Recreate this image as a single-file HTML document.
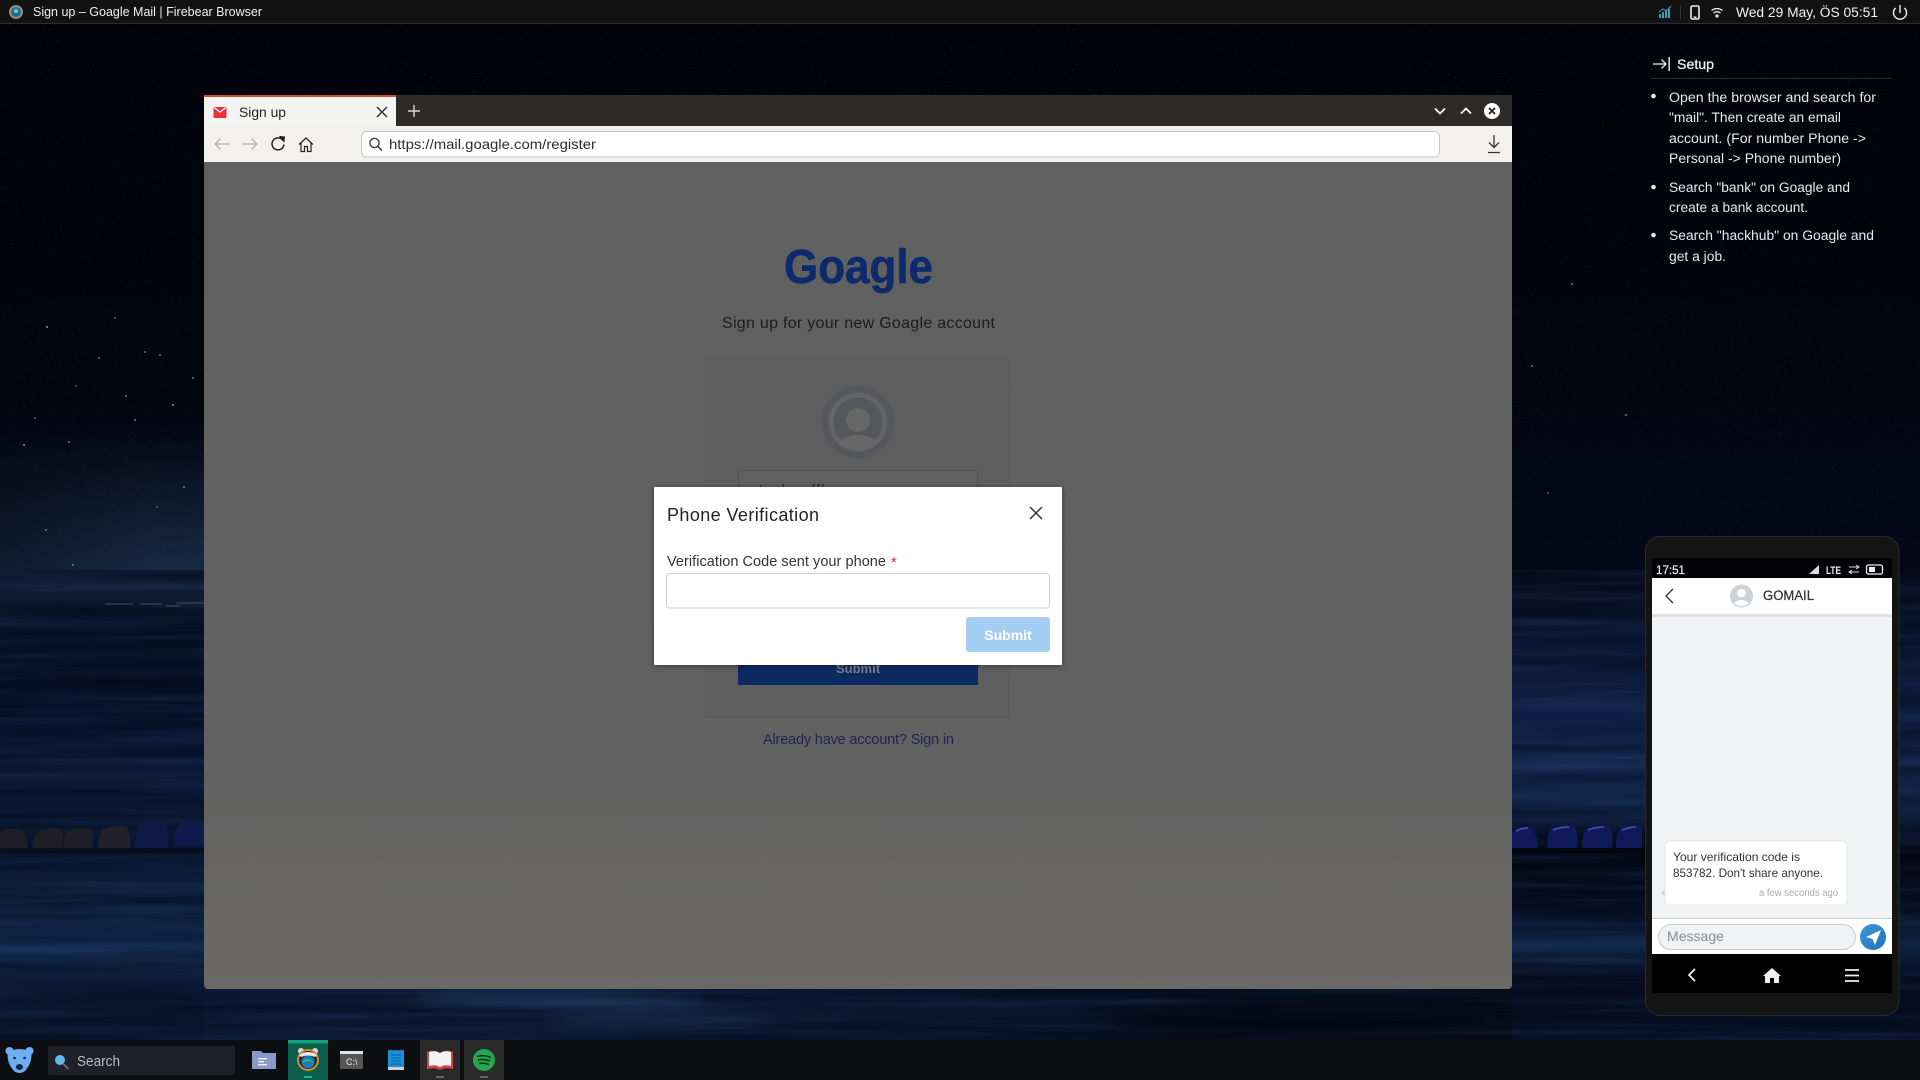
<!DOCTYPE html>
<html><head><meta charset="utf-8"><title>Sign up – Goagle Mail | Firebear Browser</title>
<style>
html,body{margin:0;padding:0;background:#03050e;width:1920px;height:1080px;overflow:hidden}
svg{display:block;position:absolute;left:0;top:0}
text{font-family:"Liberation Sans",sans-serif}
filter{color-interpolation-filters:sRGB}
</style></head><body>
<svg width="1920" height="1080" viewBox="0 0 1920 1080" xmlns="http://www.w3.org/2000/svg">
<defs>
<linearGradient id="sky" x1="0" y1="0" x2="0" y2="1"><stop offset="0" stop-color="#020309"/><stop offset=".6" stop-color="#02040e"/><stop offset="1" stop-color="#040918"/></linearGradient>
<linearGradient id="seaL" x1="0" y1="0" x2="0" y2="1"><stop offset="0" stop-color="#101e33"/><stop offset=".1" stop-color="#0a162b"/><stop offset=".25" stop-color="#061025"/><stop offset=".42" stop-color="#0a1834"/><stop offset=".55" stop-color="#08142b"/><stop offset=".66" stop-color="#0a1c36"/><stop offset=".8" stop-color="#102546"/><stop offset=".92" stop-color="#09182f"/><stop offset="1" stop-color="#09162c"/></linearGradient>
<linearGradient id="seaR" x1="0" y1="0" x2="0" y2="1"><stop offset="0" stop-color="#060b19"/><stop offset=".15" stop-color="#0a1630"/><stop offset=".3" stop-color="#0f1f44"/><stop offset=".5" stop-color="#102448"/><stop offset=".6" stop-color="#030713"/><stop offset=".72" stop-color="#061024"/><stop offset=".8" stop-color="#0f2444"/><stop offset=".87" stop-color="#060d1e"/><stop offset="1" stop-color="#061024"/></linearGradient>
<linearGradient id="seaB" x1="0" y1="0" x2="1" y2="0"><stop offset="0" stop-color="#0b1b34"/><stop offset=".45" stop-color="#0a1a32"/><stop offset=".65" stop-color="#081327"/><stop offset="1" stop-color="#050b18"/></linearGradient>
<linearGradient id="glow" x1="0" y1="0" x2="0" y2="1"><stop offset="0" stop-color="#22405f" stop-opacity="0"/><stop offset="1" stop-color="#22405f" stop-opacity=".6"/></linearGradient>
<linearGradient id="glowx" x1="0" y1="0" x2="1" y2="0"><stop offset="0" stop-color="#fff" stop-opacity=".55"/><stop offset=".6" stop-color="#fff" stop-opacity="1"/><stop offset=".85" stop-color="#fff" stop-opacity="1"/><stop offset="1" stop-color="#fff" stop-opacity="0"/></linearGradient>
<mask id="gm"><rect x="0" y="380" width="260" height="190" fill="url(#glowx)"/></mask>
<linearGradient id="content" x1="0" y1="0" x2="0" y2="1"><stop offset="0" stop-color="#606060"/><stop offset=".75" stop-color="#626262"/><stop offset="1" stop-color="#6b6966"/></linearGradient>
<linearGradient id="send" x1="0" y1="0" x2="1" y2="1"><stop offset="0" stop-color="#3f97dc"/><stop offset="1" stop-color="#1d72bd"/></linearGradient>
<filter id="streak" x="0" y="0" width="100%" height="100%"><feTurbulence type="fractalNoise" baseFrequency="0.004 0.11" numOctaves="3" seed="7"/><feColorMatrix values="0 0 0 0 .2  0 0 0 0 .3  0 0 0 0 .52  2.2 0 0 0 -.9"/></filter>
<filter id="dark" x="0" y="0" width="100%" height="100%"><feTurbulence type="fractalNoise" baseFrequency="0.003 0.07" numOctaves="2" seed="21"/><feColorMatrix values="0 0 0 0 0  0 0 0 0 .02  0 0 0 0 .08  2.2 0 0 0 -.9"/></filter>
<filter id="stars" x="0" y="0" width="100%" height="100%"><feTurbulence type="fractalNoise" baseFrequency="0.75" numOctaves="1" seed="4"/><feColorMatrix values="0 0 0 0 .8  0 0 0 0 .85  0 0 0 0 1  9 0 0 0 -6.4"/></filter>
<filter id="sh" x="-10%" y="-10%" width="120%" height="125%"><feDropShadow dx="0" dy="1" stdDeviation="3" flood-color="#000" flood-opacity=".4"/></filter>
<filter id="b8"><feGaussianBlur stdDeviation="7"/></filter>
<clipPath id="seaClip"><rect x="0" y="570" width="1920" height="470"/></clipPath>
<clipPath id="brClip"><path d="M204 95H1512V985a4 4 0 0 1-4 4H208a4 4 0 0 1-4-4Z"/></clipPath>
<clipPath id="cardClip"><rect x="738" y="470" width="240" height="17"/></clipPath>
</defs>

<!-- wallpaper -->
<rect width="1920" height="570" fill="url(#sky)"/>
<rect x="0" y="420" width="260" height="150" fill="url(#glow)" mask="url(#gm)"/>
<rect y="0" width="1920" height="570" filter="url(#stars)" opacity=".3"/>
<g fill="#dfe8f5" opacity=".65">
<circle cx="47" cy="327" r="1"/><circle cx="99" cy="358" r=".9"/><circle cx="115" cy="318" r=".8"/><circle cx="76" cy="386" r=".8"/><circle cx="126" cy="396" r=".9"/><circle cx="173" cy="405" r="1"/><circle cx="135" cy="420" r=".9"/><circle cx="24" cy="445" r="1"/><circle cx="69" cy="442" r=".9"/><circle cx="35" cy="418" r=".8"/><circle cx="145" cy="352" r=".9"/><circle cx="160" cy="355" r=".9"/><circle cx="193" cy="378" r=".9"/><circle cx="184" cy="487" r=".9"/><circle cx="46" cy="530" r=".9"/><circle cx="73" cy="565" r=".9"/><circle cx="157" cy="507" r=".8"/>
<circle cx="1572" cy="284" r=".9"/><circle cx="1532" cy="366" r=".9"/><circle cx="1626" cy="415" r=".9"/><circle cx="1548" cy="493" r=".8"/>
</g>
<rect x="0" y="570" width="204" height="470" fill="url(#seaL)"/>
<rect x="1512" y="570" width="408" height="470" fill="url(#seaR)"/>
<rect x="204" y="570" width="1308" height="470" fill="url(#seaB)"/>
<g clip-path="url(#seaClip)">
<rect y="570" width="1920" height="470" filter="url(#streak)" opacity=".25"/>
<rect y="570" width="1920" height="470" filter="url(#dark)" opacity=".5"/>
<g filter="url(#b8)">
<ellipse cx="1580" cy="762" rx="120" ry="3" fill="#4a70aa" opacity=".3"/>
<ellipse cx="1580" cy="795" rx="120" ry="3" fill="#4a70aa" opacity=".3"/>
<ellipse cx="1570" cy="945" rx="110" ry="6" fill="#2c568e" opacity=".4"/>
<ellipse cx="100" cy="950" rx="160" ry="4" fill="#2c5590" opacity=".35"/>
<ellipse cx="560" cy="1000" rx="150" ry="4" fill="#3f6aa5" opacity=".5"/>
<ellipse cx="660" cy="1022" rx="110" ry="3" fill="#3f6aa5" opacity=".4"/>
<ellipse cx="1300" cy="1020" rx="190" ry="14" fill="#030814" opacity=".9"/>
</g>
<path d="M105 604h28M140 604h22M166 606h14M176 603h28" stroke="#9fb6d2" stroke-width="1" opacity=".35"/>
<!-- buoys left -->
<g>
<path d="M0 832q10-6 22-2q6 4 6 20H0Z" fill="#1e1c26"/><path d="M32 850q0-18 10-20q16-4 19 0q4 6 0 20Z" fill="#1f1d28"/><path d="M63 850q0-18 8-20q14-4 20 0q4 6 2 20Z" fill="#1f1d28"/><path d="M98 850q0-20 8-22q14-4 22 0q3 8 2 22Z" fill="#22202b"/><path d="M135 848q0-20 8-24q14-4 24 0q2 10 1 24Z" fill="#101a48"/><path d="M174 846q0-20 8-23q14-3 22 0v23Z" fill="#0f1a4d"/>
<rect y="848" width="204" height="5" fill="#060a14" opacity=".7"/>
<g fill="#101a58"><path d="M1512 850v-18q8-6 18-5q8 6 8 23Z"/><path d="M1547 850q0-20 6-23q14-3 22 0q4 8 2 23Z"/><path d="M1582 850q0-20 6-23q14-3 22 0q4 8 2 23Z"/><path d="M1616 850q0-20 6-23q12-3 20 0v23Z"/></g>
<g stroke="#3f56c0" stroke-width="1.5" fill="none"><path d="M1516 831q6-3 12-3M1553 830q8-3 16-3M1588 830q8-3 16-3M1622 830q8-3 14-3"/></g>
<rect x="1512" y="848" width="133" height="5" fill="#04060f"/>
</g>
</g>

<!-- top panel -->
<rect width="1920" height="23" fill="#121212"/><rect y="23" width="1920" height="1" fill="#2d2d2d"/>
<circle cx="16" cy="12" r="7" fill="#a08a70"/><circle cx="16" cy="12" r="5" fill="#1b6e98"/><circle cx="16" cy="11" r="2.200" fill="#59c4d8"/>
<text x="33" y="16" fill="#f0f0f0" font-size="13" textLength="229" lengthAdjust="spacingAndGlyphs">Sign up – Goagle Mail | Firebear Browser</text>
<g fill="#2aa6c4"><rect x="1659" y="14" width="2" height="4"/><rect x="1662" y="12" width="2" height="6"/><rect x="1665" y="10" width="2" height="8"/><rect x="1668" y="9" width="2" height="9"/></g>
<path d="M1659 12l4-3 3 2 5-5" stroke="#6c8fc0" fill="none"/>
<rect x="1680" y="5" width="1" height="15" fill="#333"/>
<rect x="1691" y="6" width="8" height="13" rx="1.4" fill="none" stroke="#eee" stroke-width="1.6"/><rect x="1693.5" y="16.5" width="3" height="1.4" fill="#eee"/>
<g fill="none" stroke="#eee" stroke-width="1.3"><path d="M1711.5 10.5q5.500-4 11 0"/><path d="M1713.5 13q3.500-2.600 7 0"/></g><circle cx="1717" cy="16" r="1.6" fill="#eee"/>
<text x="1736" y="17" fill="#f2f2f2" font-size="13.500" textLength="142" lengthAdjust="spacingAndGlyphs">Wed 29 May, ÖS 05:51</text>
<path d="M1895.500 8a6.500 6.500 0 1 0 9 0M1900 5v8" fill="none" stroke="#eee" stroke-width="1.400"/>

<!-- setup panel -->
<path d="M1653 64h13M1661.500 59.500l4.500 4.500-4.500 4.500" fill="none" stroke="#eee" stroke-width="1.300"/><rect x="1668.500" y="57" width="1.400" height="14" fill="#eee"/>
<text x="1677" y="69" fill="#f0f0f0" stroke="#f0f0f0" stroke-width=".3" font-size="14" textLength="37" lengthAdjust="spacingAndGlyphs">Setup</text>
<rect x="1651" y="78" width="241" height="1" fill="#2a2c30"/>
<g fill="#e9e9e9" font-size="13.500">
<circle cx="1653.500" cy="96" r="2.300"/><circle cx="1653.500" cy="187" r="2.300"/><circle cx="1653.500" cy="235" r="2.300"/>
<text x="1669" y="102" textLength="207" lengthAdjust="spacingAndGlyphs">Open the browser and search for</text>
<text x="1669" y="122" textLength="172" lengthAdjust="spacingAndGlyphs">"mail". Then create an email</text>
<text x="1669" y="143" textLength="197" lengthAdjust="spacingAndGlyphs">account. (For number Phone -&gt;</text>
<text x="1669" y="163" textLength="172" lengthAdjust="spacingAndGlyphs">Personal -&gt; Phone number)</text>
<text x="1669" y="192" textLength="181" lengthAdjust="spacingAndGlyphs">Search "bank" on Goagle and</text>
<text x="1669" y="212" textLength="139" lengthAdjust="spacingAndGlyphs">create a bank account.</text>
<text x="1669" y="240" textLength="205" lengthAdjust="spacingAndGlyphs">Search "hackhub" on Goagle and</text>
<text x="1669" y="261" textLength="57" lengthAdjust="spacingAndGlyphs">get a job.</text>
</g>

<!-- browser -->
<g clip-path="url(#brClip)">
<rect x="204" y="95" width="1308" height="31" fill="#2c2b29"/>
<rect x="204" y="95" width="192" height="31" fill="#f4f4f2"/><rect x="204" y="95" width="192" height="2" fill="#d8492b"/>
<rect x="204" y="126" width="1308" height="36" fill="#f2f1ee"/>
<rect x="204" y="162" width="1308" height="827" fill="url(#content)"/>
</g>
<path d="M213.500 107h13v10a1 1 0 0 1-1 1h-11a1 1 0 0 1-1-1Z" fill="#e8333c"/><path d="M214 107.500l6 4.500 6-4.500" fill="none" stroke="#fff" stroke-width="1.200"/>
<text x="239" y="117" fill="#222" font-size="14" textLength="47" lengthAdjust="spacingAndGlyphs">Sign up</text>
<path d="M377 107l10 10M387 107l-10 10" stroke="#333" stroke-width="1.500"/>
<path d="M414 105v12M408 111h12" stroke="#d5d5d5" stroke-width="1.500"/>
<path d="M1435 108.500l5 5 5-5M1461 113.500l5-5 5 5" fill="none" stroke="#fff" stroke-width="1.700"/>
<circle cx="1492" cy="111" r="8" fill="#fff"/><path d="M1489 108l6 6M1495 108l-6 6" stroke="#222" stroke-width="1.800"/>
<path d="M230 144h-15M220.500 138.500l-5.500 5.500 5.500 5.500" fill="none" stroke="#b0b0b0" stroke-width="1.300"/>
<path d="M242 144h15M251.500 138.500l5.500 5.500-5.500 5.500" fill="none" stroke="#b0b0b0" stroke-width="1.300"/>
<path d="M283 140.500a6 6 0 1 0 1 4" fill="none" stroke="#222" stroke-width="1.500"/><path d="M280 136.500l4.500 .5-.5 4.500Z" fill="#222" stroke="#222"/>
<path d="M299 144.500l7-6.500 7 6.500M301 143v8.500h3.500v-5h3v5h3.500V143" fill="none" stroke="#222" stroke-width="1.200"/>
<rect x="361.500" y="131.500" width="1078" height="25.500" rx="5" fill="#fff" stroke="#c9c7c1"/>
<circle cx="374.500" cy="143" r="4.600" fill="none" stroke="#333" stroke-width="1.300"/><path d="M378 146.500l4 4" stroke="#333" stroke-width="1.500"/>
<text x="389" y="149" fill="#2c2c2c" font-size="14" textLength="207" lengthAdjust="spacingAndGlyphs">https://mail.goagle.com/register</text>
<path d="M1494 135v12M1489 142.500l5 5 5-5M1488 152.500h12" fill="none" stroke="#333" stroke-width="1.300"/>

<!-- page -->
<text x="784" y="283" fill="#0c2a6c" stroke="#0c2a6c" stroke-width=".6" font-size="48" font-weight="bold" textLength="149" lengthAdjust="spacingAndGlyphs">Goagle</text>
<text x="722" y="328" fill="#1c1c1c" font-size="16" textLength="273" lengthAdjust="spacing">Sign up for your new Goagle account</text>
<rect x="704" y="355" width="306" height="362" rx="2" fill="#5e5e5e"/>
<rect x="706" y="717" width="302" height="1" fill="#585858"/>
<circle cx="858" cy="422" r="33" fill="none" stroke="#54575b" stroke-width="6.500"/>
<circle cx="858" cy="422" r="29" fill="#666"/>
<circle cx="858" cy="422" r="24.500" fill="#54575b"/>
<circle cx="858" cy="420" r="12" fill="#676767"/>
<path d="M841 440q17-11 34 0q-7 6.500-17 6.500t-17-6.500Z" fill="#676767"/>
<rect x="738.500" y="470.500" width="239" height="36" rx="2" fill="#606060" stroke="#505050"/>
<text x="750" y="495" fill="#2e2e2e" font-size="15" textLength="84" lengthAdjust="spacing" clip-path="url(#cardClip)">stackwaffle</text>
<rect x="738" y="660" width="240" height="25" rx="1" fill="#0c2a62"/>
<text x="858" y="673" fill="#7c8089" font-size="13" font-weight="bold" text-anchor="middle">Submit</text>
<text x="763" y="744" fill="#20244f" font-size="14.500" textLength="191" lengthAdjust="spacing">Already have account? Sign in</text>

<!-- modal -->
<rect x="654" y="487" width="408" height="178" rx="1" fill="#fff" filter="url(#sh)"/>
<text x="667" y="521" fill="#222" font-size="18" textLength="152" lengthAdjust="spacing">Phone Verification</text>
<path d="M1030 507l12 12M1042 507l-12 12" stroke="#333" stroke-width="1.500"/>
<text x="667" y="566" fill="#333" font-size="14.500" textLength="219" lengthAdjust="spacing">Verification Code sent your phone</text>
<text x="891" y="567" fill="#dc2a4a" font-size="14.500">*</text>
<rect x="666.500" y="573.500" width="383" height="34.500" rx="3" fill="#fff" stroke="#cfcfcf"/>
<rect x="966" y="617" width="84" height="35" rx="3" fill="#a4cdf3"/>
<text x="1008" y="640" fill="#fff" font-size="14" font-weight="bold" text-anchor="middle">Submit</text>

<!-- phone -->
<rect x="1645.500" y="536.500" width="253.500" height="479" rx="15" fill="#141414" stroke="#2b2b2b"/>
<rect x="1652" y="558" width="240" height="20" fill="#030306"/>
<text x="1656" y="574" fill="#eee" font-size="12" stroke="#eee" stroke-width=".2" textLength="29" lengthAdjust="spacingAndGlyphs">17:51</text>
<path d="M1809 574l10-9v9Z" fill="#ddd"/>
<text x="1826" y="574" fill="#eee" font-size="11" font-weight="bold" textLength="15" lengthAdjust="spacingAndGlyphs">LTE</text>
<path d="M1849 567h10M1856 565l3 2-3 2M1859 572h-10M1852 570l-3 2 3 2" fill="none" stroke="#ddd"/>
<rect x="1866.500" y="565" width="16" height="9" rx="2" fill="none" stroke="#eee" stroke-width="1.300"/><rect x="1869" y="567" width="6" height="5" fill="#eee"/>
<rect x="1652" y="578" width="240" height="376" fill="#f1f2f4"/>
<rect x="1652" y="578" width="240" height="36" fill="#fff"/><rect x="1652" y="614" width="240" height="3" fill="#d5d6d9" opacity=".6"/>
<path d="M1673 589l-7 7 7 7" fill="none" stroke="#333" stroke-width="1.400"/>
<circle cx="1741.500" cy="596" r="11.500" fill="#cfd1d9"/><circle cx="1741.500" cy="593" r="4.300" fill="#fff"/><path d="M1734 603q7.500-6 15 0q-3.500 3-7.500 3t-7.500-3Z" fill="#fff"/>
<text x="1763" y="600" fill="#333" stroke="#333" stroke-width=".25" font-size="13.500" textLength="51" lengthAdjust="spacingAndGlyphs">GOMAIL</text>
<path d="M1665 889l-4 4 4 4Z" fill="#d5d6da"/>
<rect x="1665" y="841" width="182" height="64" rx="5" fill="#fff" stroke="#e6e7ea"/>
<text x="1673" y="861" fill="#333" font-size="12" textLength="127" lengthAdjust="spacingAndGlyphs">Your verification code is</text>
<text x="1673" y="877" fill="#333" font-size="12" textLength="150" lengthAdjust="spacingAndGlyphs">853782. Don't share anyone.</text>
<text x="1838" y="896" fill="#aaa" font-size="10" text-anchor="end" textLength="79" lengthAdjust="spacingAndGlyphs">a few seconds ago</text>
<rect x="1652" y="918" width="240" height="36" fill="#fff"/><rect x="1652" y="918" width="240" height="1" fill="#c9cacc"/>
<rect x="1658.500" y="924.500" width="197" height="25" rx="12.500" fill="#f1f2f4" stroke="#c9cbcf"/>
<text x="1667" y="941" fill="#8b8d93" font-size="14" textLength="57" lengthAdjust="spacingAndGlyphs">Message</text>
<circle cx="1873" cy="937" r="13" fill="url(#send)"/><path d="M1866 937l15-7-6 15-2.500-6Z" fill="#fff"/>
<rect x="1652" y="954" width="240" height="39" fill="#000"/>
<path d="M1695 969l-6 6 6 6" fill="none" stroke="#eee" stroke-width="1.800"/>
<path d="M1763 976l9-8 9 8h-2v7h-5v-5h-4v5h-5v-7Z" fill="#f2f2f2"/>
<path d="M1845 970h14M1845 975.500h14M1845 981h14" stroke="#eee" stroke-width="1.800"/>

<!-- taskbar -->
<rect y="1040" width="1920" height="40" fill="#0d0e11"/>
<circle cx="9.500" cy="1051" r="4" fill="#6eaef2"/><circle cx="29.500" cy="1051" r="4" fill="#6eaef2"/>
<path d="M8 1052q11-6 23 0q2 10-6 19q-5.500 4-11 0q-8-9-6-19Z" fill="#6eaef2"/><ellipse cx="19.500" cy="1067" rx="3.500" ry="3" fill="#0d2647"/><circle cx="14.500" cy="1058" r="1.300" fill="#0d2647"/><circle cx="24.500" cy="1058" r="1.300" fill="#0d2647"/>
<rect x="48" y="1046" width="187" height="29" rx="2" fill="#1e2128"/>
<circle cx="60" cy="1060" r="5" fill="#60bbe8"/><path d="M63.500 1064l5 5" stroke="#777" stroke-width="1.600"/>
<text x="77" y="1066" fill="#bcbcbc" font-size="14.500" textLength="43" lengthAdjust="spacingAndGlyphs">Search</text>
<path d="M252 1051h9l2 2h13v16h-24Z" fill="#8a98c8"/><rect x="258" y="1058" width="9" height="1.400" fill="#e8ecf6"/><rect x="258" y="1061" width="6" height="1.400" fill="#e8ecf6"/><rect x="258" y="1064" width="9" height="1.400" fill="#e8ecf6"/>
<rect x="288" y="1040" width="40" height="40" fill="#0c5d4b"/><rect x="288" y="1040" width="40" height="3.500" fill="#14a37f"/><rect x="304" y="1076" width="8" height="2" fill="#19b88e"/>
<circle cx="301" cy="1051" r="3" fill="#ddd"/><circle cx="315" cy="1051" r="3" fill="#ddd"/><circle cx="308" cy="1060" r="11" fill="#e08a28"/><circle cx="308" cy="1060" r="9" fill="#1d2b3a"/><circle cx="308" cy="1062" r="6.500" fill="#1c7fb4"/><path d="M302 1062q5-5 12 0q-5-2-12 0Z" fill="#4fc27a"/><path d="M299 1055q9-6 18 0l-2 2q-7-3-14 0Z" fill="#e9e9ea"/>
<rect x="340" y="1051" width="23" height="18" fill="#565656"/><rect x="340" y="1051" width="23" height="3" fill="#e2e2e2"/><text x="346" y="1065" fill="#e8e8e8" font-size="9">C:\</text>
<rect x="388" y="1050" width="16" height="20" fill="#1b8fd8"/><rect x="388" y="1067" width="16" height="3" fill="#d1d1d1"/><path d="M391 1055h10M391 1058h10M391 1061h10M391 1064h10" stroke="#0d5f9e"/><path d="M390 1049v2M393 1049v2M396 1049v2M399 1049v2M402 1049v2" stroke="#333"/>
<rect x="420" y="1040" width="40" height="40" fill="#2a2a2a"/><rect x="436" y="1076" width="8" height="2" fill="#666"/>
<path d="M427 1052q7-3 13 1q6-4 13-1v17q-7-2-13 1q-6-3-13-1Z" fill="#d54545"/><path d="M429 1052q6-2 11 1v14q-5-3-11-1Z" fill="#f4f4f4"/><path d="M451 1052q-6-2-11 1v14q5-3 11-1Z" fill="#f4f4f4"/>
<rect x="464" y="1040" width="40" height="40" fill="#2a2a2a"/><rect x="480" y="1076" width="8" height="2" fill="#666"/>
<circle cx="484" cy="1060" r="11" fill="#23a84f"/><path d="M477 1056.500q7-2 14 1M478 1060q6-1.500 12 1M479 1063.500q5-1 10 1" fill="none" stroke="#0e3a1c" stroke-width="1.600"/>
</svg>
</body></html>
